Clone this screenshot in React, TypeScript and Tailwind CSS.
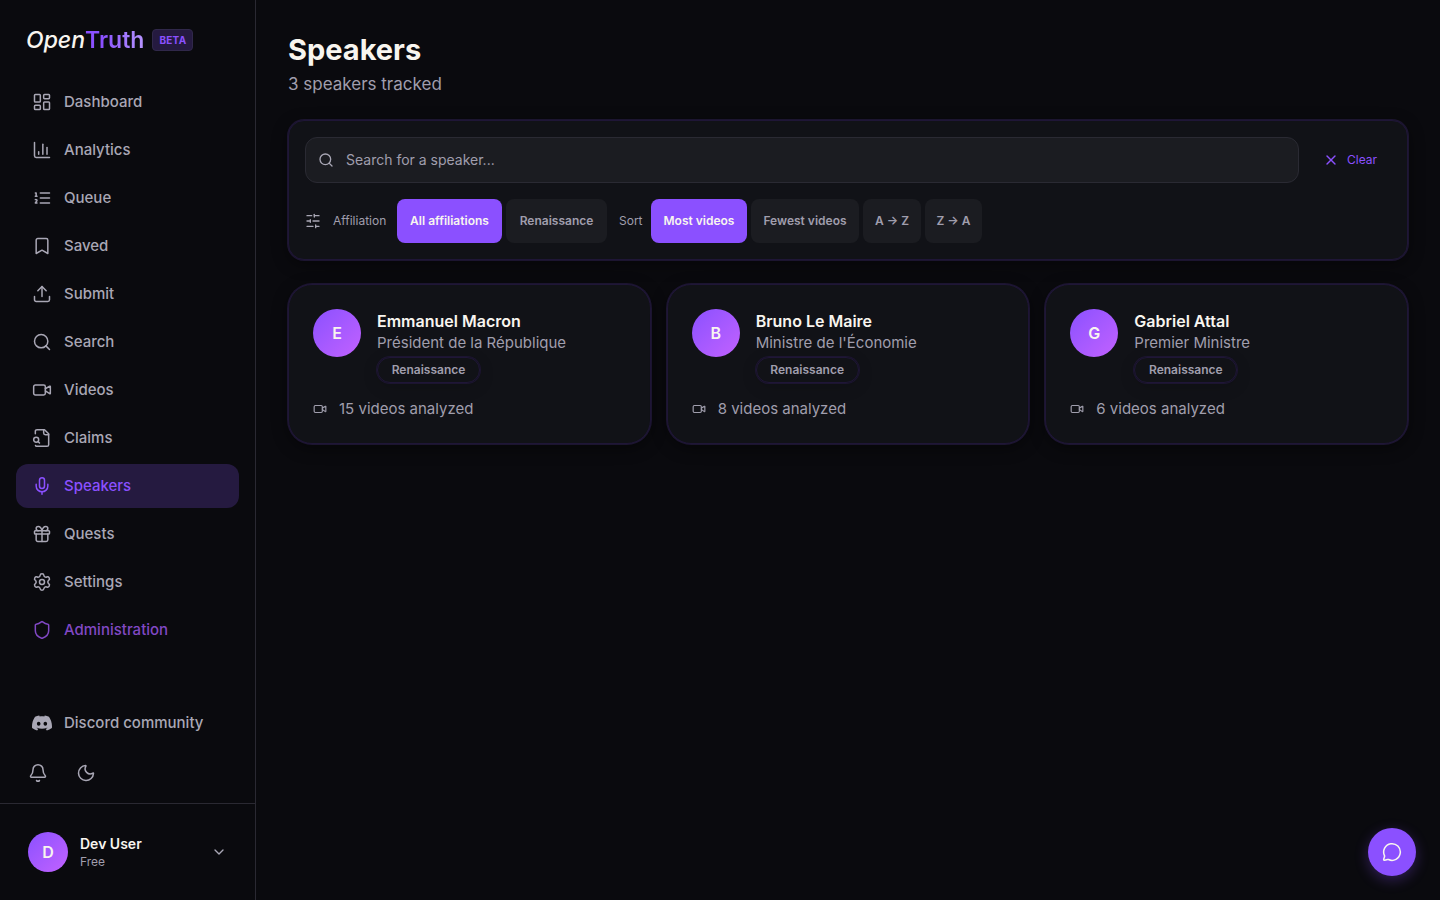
import React, { useState } from "react";
import {
    Bell,
    Bookmark,
    ChartColumn,
    ChevronDown,
    Gift,
    LayoutDashboard,
    MessageCircle,
    Mic,
    Moon,
    Search,
    Settings,
    Shield,
    Upload,
    Video,
    X,
} from "lucide-react";
import { SiDiscord } from "react-icons/si";

type IconProps = { size?: number; strokeWidth?: number; className?: string };

// Builds a stroked 24x24 icon for the shapes lucide draws differently
function strokeIcon(paths: string[], extra?: React.ReactNode) {
    return function Icon({ size = 20, strokeWidth = 2, className }: IconProps) {
        return (
            <svg
                width={size}
                height={size}
                viewBox="0 0 24 24"
                fill="none"
                stroke="currentColor"
                strokeWidth={strokeWidth}
                strokeLinecap="round"
                strokeLinejoin="round"
                className={className}
                aria-hidden="true"
            >
                {paths.map((d) => (
                    <path key={d} d={d} />
                ))}
                {extra}
            </svg>
        );
    };
}

const QueueIcon = strokeIcon([
    "M10 12h11",
    "M10 18h11",
    "M10 6h11",
    "M4 10h2",
    "M4 6h1v4",
    "M6 18H4c0-1 2-2 2-3s-1-1.5-2-1",
]);

const ClaimsIcon = strokeIcon(
    [
        "M14 2v4a2 2 0 0 0 2 2h4",
        "M4.268 21a2 2 0 0 0 1.727 1H18a2 2 0 0 0 2-2V7l-5-5H6a2 2 0 0 0-2 2v3",
        "m9 18-1.5-1.5",
    ],
    <circle cx="5" cy="14" r="3" />
);

const FiltersIcon = strokeIcon([
    "M21 4h-7",
    "M10 4H3",
    "M21 12h-9",
    "M8 12H3",
    "M21 20h-5",
    "M12 20H3",
    "M14 2v4",
    "M8 10v4",
    "M16 18v4",
]);

const navItems = [
    { label: "Dashboard", icon: LayoutDashboard },
    { label: "Analytics", icon: ChartColumn },
    { label: "Queue", icon: QueueIcon },
    { label: "Saved", icon: Bookmark },
    { label: "Submit", icon: Upload },
    { label: "Search", icon: Search },
    { label: "Videos", icon: Video },
    { label: "Claims", icon: ClaimsIcon },
    { label: "Speakers", icon: Mic, color: "bg-[#251a40] text-[#8b50ff]" },
    { label: "Quests", icon: Gift },
    { label: "Settings", icon: Settings },
    { label: "Administration", icon: Shield, color: "text-[#8148c4]" },
];

const affiliations = [
    { label: "All affiliations", width: "min-w-[105px]" },
    { label: "Renaissance", width: "min-w-[101px]" },
];

const sorts = [
    { label: "Most videos", width: "min-w-24" },
    { label: "Fewest videos", width: "min-w-[108px]" },
    { label: "A → Z", width: "min-w-[58px]" },
    { label: "Z → A", width: "min-w-[57px]" },
];

const speakers = [
    { name: "Emmanuel Macron", role: "Président de la République", party: "Renaissance", videos: 15 },
    { name: "Bruno Le Maire", role: "Ministre de l'Économie", party: "Renaissance", videos: 8 },
    { name: "Gabriel Attal", role: "Premier Ministre", party: "Renaissance", videos: 6 },
];

const cardStyle =
    "border border-[#1f1637] bg-[#111217] shadow-[0_0_0_1px_#1c1530,0_4px_16px_rgba(0,0,0,0.45)]";

type ChipProps = { label: string; width: string; active: boolean; onClick: () => void };

function Chip({ label, width, active, onClick }: ChipProps) {
    return (
        <button
            type="button"
            onClick={onClick}
            aria-pressed={active}
            className={`h-11 whitespace-nowrap rounded-lg px-2 text-xs font-semibold ${width} ${
                active ? "bg-[#8b50ff] text-[#f8f5ef]" : "bg-[#1b1c21] text-[#a09ead]"
            }`}
        >
            {label}
        </button>
    );
}

function Sidebar() {
    return (
        <aside className="sticky top-0 flex h-screen w-64 shrink-0 flex-col border-r border-[#2a2932]">
            <div className="flex h-20 shrink-0 items-center gap-2 px-[26px]">
                <a href="#" className="text-[23px] font-medium leading-8 text-[#f8f5ef]">
                    <span className="italic">Open</span>
                    <span className="bg-linear-to-r from-[#8b50ff] from-30% to-[#b794ff] bg-clip-text font-semibold text-transparent">
                        Truth
                    </span>
                </a>
                <span className="rounded border border-[#30284a] bg-[#251a40] px-1.5 py-0.5 text-[10px] font-bold leading-4 tracking-wide text-[#8b50ff]">
                    BETA
                </span>
            </div>

            <nav className="flex flex-1 flex-col gap-1 overflow-hidden px-4">
                {navItems.map(({ label, icon: Icon, color }) => (
                    <a
                        key={label}
                        href="#"
                        className={`flex h-11 shrink-0 items-center gap-3 rounded-xl px-4 text-[15px] font-medium ${
                            color ?? "text-[#a9a7b5]"
                        }`}
                    >
                        <Icon size={20} strokeWidth={1.8} />
                        {label}
                    </a>
                ))}
            </nav>

            <div className="flex flex-col gap-1.5 px-4 pb-2">
                <a href="#" className="flex h-11 items-center gap-3 rounded-xl px-4 text-[15px] font-medium text-[#a9a7b5]">
                    <SiDiscord size={20} />
                    Discord community
                </a>
                <div className="flex gap-1 text-[#a9a7b5]">
                    <button type="button" aria-label="Notifications" className="flex size-11 items-center justify-center">
                        <Bell size={20} strokeWidth={1.8} />
                    </button>
                    <button type="button" aria-label="Toggle theme" className="flex size-11 items-center justify-center">
                        <Moon size={20} strokeWidth={1.8} />
                    </button>
                </div>
            </div>

            <div className="border-t border-[#2a2932] p-4">
                <button type="button" className="flex w-full items-center gap-3 rounded-xl p-3 text-left">
                    <span className="flex size-10 items-center justify-center rounded-full bg-linear-to-br from-[#8b50ff] to-[#c261ff] font-semibold text-[#f8f5ef]">
                        D
                    </span>
                    <span className="flex flex-1 flex-col">
                        <span className="text-sm font-semibold leading-5 text-[#f8f5ef]">Dev User</span>
                        <span className="text-xs leading-4 text-[#a09ead]">Free</span>
                    </span>
                    <ChevronDown size={16} strokeWidth={2} className="text-[#a9a7b5]" />
                </button>
            </div>
        </aside>
    );
}

export default function App() {
    const [query, setQuery] = useState("");
    const [affiliation, setAffiliation] = useState("All affiliations");
    const [sort, setSort] = useState("Most videos");

    const clearFilters = () => {
        setQuery("");
        setAffiliation("All affiliations");
        setSort("Most videos");
    };

    return (
        <div className="flex min-h-screen bg-[#0a0a0e] font-['Inter','Liberation_Sans',sans-serif]">
            <Sidebar />

            <main className="min-w-0 flex-1 p-8">
                <h1 className="text-[29px] font-bold leading-9 text-[#f8f5ef]">Speakers</h1>
                <p className="mt-1 text-[17px] leading-6 text-[#a09ead]">3 speakers tracked</p>

                {/* Filters */}
                <section className={`mt-6 flex flex-col gap-4 rounded-2xl p-4 ${cardStyle}`}>
                    <div className="flex items-center gap-3">
                        <label className="flex h-[46px] flex-1 items-center gap-3 rounded-xl border border-[#2a2a33] bg-[#1b1c21] px-3">
                            <Search size={16} strokeWidth={2} className="text-[#a9a7b5]" />
                            <input
                                type="text"
                                aria-label="Search for a speaker"
                                value={query}
                                onChange={(e) => setQuery(e.target.value)}
                                placeholder="Search for a speaker..."
                                className="flex-1 bg-transparent text-sm text-[#f8f5ef] outline-none placeholder:text-[#a09ead]"
                            />
                        </label>
                        <button
                            type="button"
                            onClick={clearFilters}
                            className="flex h-11 min-w-20 items-center gap-2 px-3 text-xs text-[#8b50ff]"
                        >
                            <X size={16} strokeWidth={2} />
                            Clear
                        </button>
                    </div>

                    <div className="flex flex-wrap items-center gap-3 text-xs text-[#a09ead]">
                        <FiltersIcon size={16} strokeWidth={2} className="text-[#a9a7b5]" />
                        <div className="flex items-center gap-2">
                            <span className="min-w-14">Affiliation</span>
                            <div className="flex gap-1">
                                {affiliations.map((item) => (
                                    <Chip
                                        key={item.label}
                                        {...item}
                                        active={affiliation === item.label}
                                        onClick={() => setAffiliation(item.label)}
                                    />
                                ))}
                            </div>
                        </div>
                        <div className="flex items-center gap-2">
                            <span className="min-w-6">Sort</span>
                            <div className="flex gap-1">
                                {sorts.map((item) => (
                                    <Chip
                                        key={item.label}
                                        {...item}
                                        active={sort === item.label}
                                        onClick={() => setSort(item.label)}
                                    />
                                ))}
                            </div>
                        </div>
                    </div>
                </section>

                {/* Speaker cards */}
                <div className="mt-6 grid grid-cols-1 gap-4 md:grid-cols-2 lg:grid-cols-3">
                    {speakers.map((speaker) => (
                        <article key={speaker.name} className={`rounded-3xl p-6 ${cardStyle}`}>
                            <div className="flex items-start gap-4">
                                <div className="flex size-12 shrink-0 items-center justify-center rounded-full bg-linear-to-br from-[#8b50ff] to-[#c261ff] font-semibold text-[#f8f5ef]">
                                    {speaker.name[0]}
                                </div>
                                <div className="min-w-0">
                                    <h2 className="text-base font-semibold leading-6 text-[#f8f5ef]">{speaker.name}</h2>
                                    <p className="text-[15px] leading-5 text-[#a09ead]">{speaker.role}</p>
                                    <span className="mt-1 flex h-[26px] w-fit min-w-[103px] items-center justify-center rounded-full border border-[#1f1637] px-3 text-xs font-semibold text-[#a09ead] shadow-[0_0_0_1px_#1c1530,0_4px_16px_rgba(0,0,0,0.15)]">
                                        {speaker.party}
                                    </span>
                                </div>
                            </div>
                            <p className="mt-4 flex items-center gap-3 text-[15px] leading-5 text-[#a09ead]">
                                <Video size={14} strokeWidth={2} />
                                {speaker.videos} videos analyzed
                            </p>
                        </article>
                    ))}
                </div>
            </main>

            <button
                type="button"
                aria-label="Open chat"
                className="fixed bottom-6 right-6 flex size-12 items-center justify-center rounded-full bg-[#8b50ff] text-[#f8f5ef] shadow-[0_4px_14px_rgba(139,80,255,0.3)]"
            >
                <MessageCircle size={20} strokeWidth={1.8} />
            </button>
        </div>
    );
}
